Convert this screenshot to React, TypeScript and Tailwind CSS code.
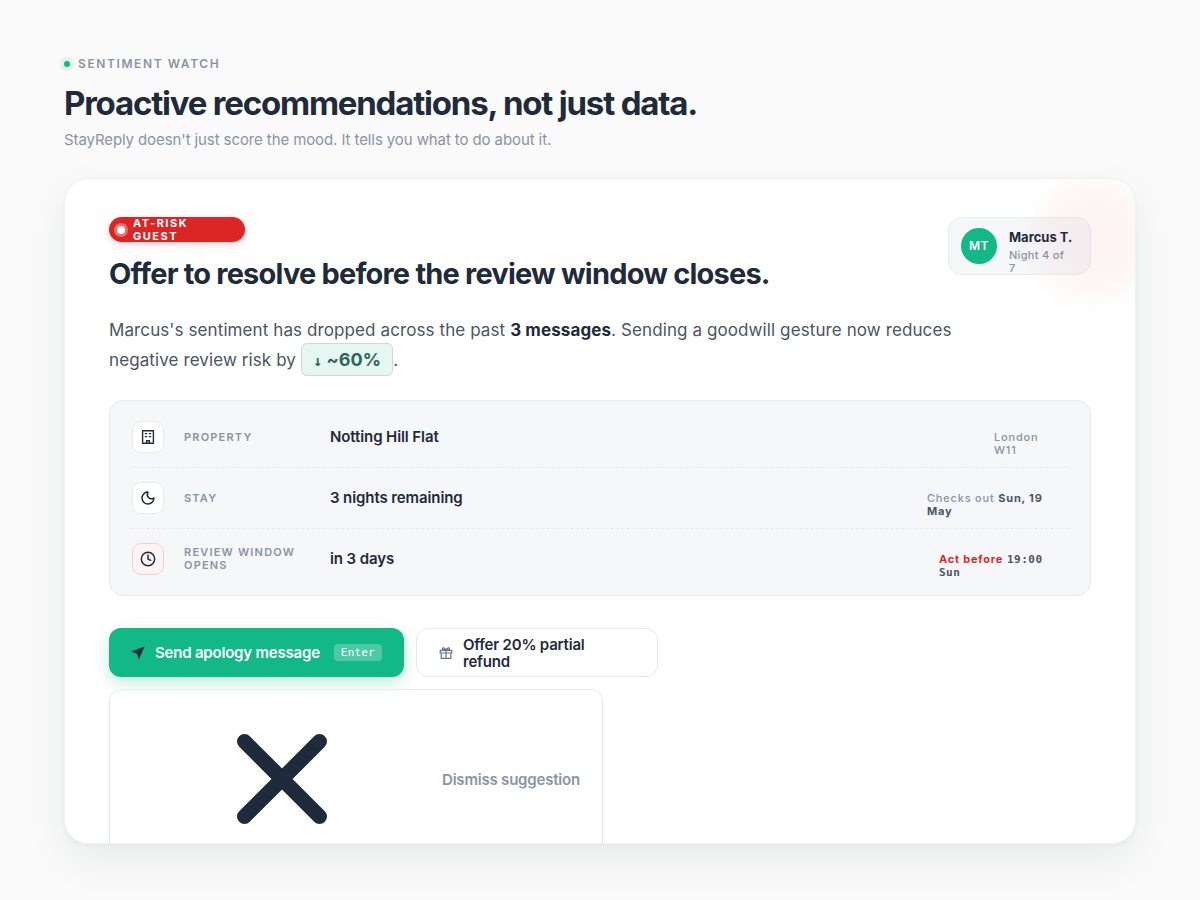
import type { ReactNode } from 'react'
import clsx from 'clsx'
import { Clock, Moon } from 'lucide-react'

type Detail = {
  label: string
  value: string
  icon: ReactNode
  meta: ReactNode
  metaWidth: string
  urgent?: boolean
}

function BuildingIcon() {
  return (
    <svg
      viewBox="0 0 16 16"
      className="size-4"
      fill="none"
      stroke="currentColor"
      strokeWidth="1.4"
      strokeLinejoin="round"
    >
      <path d="M2.6 1.7h10.8v12.6H2.6z" />
      <path d="M6.6 14v-2.2h2.8V14" />
      <path d="M4.8 4.6h2.4M8.8 4.6h2.4M4.8 7.6h2.4M8.8 7.6h2.4" />
    </svg>
  )
}

function SendIcon() {
  return (
    <svg viewBox="0 0 14 14" className="size-3.5 text-[#1f2a3a]">
      <path d="M13.6.4 7.8 13.4 6.2 7.9.2 5.6z" fill="currentColor" />
    </svg>
  )
}

function GiftIcon() {
  return (
    <svg
      viewBox="0 0 14 14"
      className="size-3.5 shrink-0 text-slate-500"
      fill="none"
      stroke="currentColor"
      strokeWidth="1.2"
      strokeLinejoin="round"
    >
      <path d="M1.2 4.4h11.6v2.6H1.2z" />
      <path d="M2.2 7v5.4h9.6V7M7 4.4v8" />
      <path d="M7 4.2C5.9 1.6 3.2 1 3.4 2.9 3.5 3.9 4.6 4.2 7 4.2zM7 4.2c1.1-2.6 3.8-3.2 3.6-1.3C10.5 3.9 9.4 4.2 7 4.2z" />
    </svg>
  )
}

const details: Detail[] = [
  {
    label: 'Property',
    value: 'Notting Hill Flat',
    icon: <BuildingIcon />,
    meta: (
      <>
        London
        <br />
        W11
      </>
    ),
    metaWidth: 'w-[74px]',
  },
  {
    label: 'Stay',
    value: '3 nights remaining',
    icon: <Moon className="size-4" strokeWidth={2.2} />,
    meta: (
      <>
        Checks out{' '}
        <strong className="font-bold text-[#4a5562]">
          Sun, 19
          <br />
          May
        </strong>
      </>
    ),
    metaWidth: 'w-[141px]',
  },
  {
    label: 'Review window opens',
    value: 'in 3 days',
    icon: <Clock className="size-4" strokeWidth={2.2} />,
    meta: (
      <>
        <span className="font-bold text-[#dc2626]">Act before</span>{' '}
        <span className="font-['DejaVu_Sans_Mono',monospace] font-bold tracking-[0.5px] text-[#4a5562]">
          19:00
          <br />
          Sun
        </span>
      </>
    ),
    metaWidth: 'w-[129px]',
    urgent: true,
  },
]

function DetailRow({ label, value, icon, meta, metaWidth, urgent }: Detail) {
  return (
    <li className="flex items-center gap-5 border-b border-dashed border-[#e6e9ec] py-3.5 last:border-b-0">
      <span
        className={clsx(
          'flex size-8 shrink-0 items-center justify-center rounded-[9px] border text-[#1f2a3a]',
          urgent ? 'border-[#f8cccc] bg-[#fdf5f4]' : 'border-[#e8eaed] bg-white',
        )}
      >
        {icon}
      </span>
      <span className="w-[126px] shrink-0 text-[11px] leading-[13px] font-semibold tracking-[1.2px] text-[#8a94a3] uppercase">
        {label}
      </span>
      <span className="flex-1 text-[15px] leading-5 font-semibold tracking-[-0.1px] text-[#1f2a3a]">
        {value}
      </span>
      <span
        className={clsx(
          'h-3 self-start pt-2.5 text-[11px] leading-[13px] font-medium tracking-[0.8px] text-[#8a94a3]',
          metaWidth,
        )}
      >
        {meta}
      </span>
    </li>
  )
}

function GuestChip() {
  return (
    <div className="flex h-[58px] w-[143px] shrink-0 items-start gap-3 rounded-[14px] border border-[#e8eaed] bg-[#f5f7f9] px-3 pt-2.5">
      <span className="flex size-9 shrink-0 items-center justify-center rounded-full bg-[#12b886] text-xs font-semibold tracking-[0.5px] text-white">
        MT
      </span>
      <div>
        <p className="text-[13px] leading-[19px] font-bold whitespace-nowrap text-[#1f2a3a]">
          Marcus T.
        </p>
        <p className="mt-0.5 text-[11px] leading-[13px] font-medium tracking-[0.3px] text-[#8a94a3]">
          Night 4 of
          <br />7
        </p>
      </div>
    </div>
  )
}

function App() {
  return (
    <main className="flex h-screen flex-col overflow-hidden bg-[#fafafa] px-16 py-14 font-['Inter',sans-serif]">
      <header>
        <p className="flex items-center gap-2 text-xs leading-[15px] font-semibold tracking-[1.6px] text-[#8a94a3] uppercase">
          <span className="size-1.5 rounded-full bg-[#12b886] ring-4 ring-[#12b886]/10" />
          Sentiment Watch
        </p>
        <h1 className="mt-3 text-[33px] leading-10 font-bold tracking-[-1.2px] text-[#1f2a3a]">
          Proactive recommendations, not just data.
        </h1>
        <p className="mt-2 text-[15px] leading-[18px] tracking-[-0.1px] text-[#8a94a3]">
          StayReply doesn't just score the mood. It tells you what to do about
          it.
        </p>
      </header>

      <section className="relative mt-[29px] min-h-0 flex-1 overflow-hidden rounded-3xl border border-[#f0f1f3] bg-white px-11 pt-[38px] shadow-[0_2px_4px_rgba(31,42,58,0.04),0_16px_40px_rgba(31,42,58,0.07)]">
        <div className="flex justify-between">
          <div>
            <p className="flex h-[25px] w-[136px] items-center gap-2 rounded-full bg-[#dc2626] pl-2 text-[11px] leading-[13px] font-bold tracking-[1.5px] text-white uppercase shadow-[0_2px_6px_rgba(220,38,38,0.25)]">
              <span className="size-2 shrink-0 rounded-full bg-white ring-3 ring-white/35" />
              <span>
                At-risk
                <br />
                guest
              </span>
            </p>
            <h2 className="mt-3 text-[29px] leading-10 font-bold tracking-[-0.8px] text-[#1f2a3a]">
              Offer to resolve before the review window closes.
            </h2>
          </div>
          <GuestChip />
        </div>

        <p className="mt-[21px] max-w-[860px] text-[17px] leading-[30px] tracking-[0.1px] text-[#4a5562]">
          Marcus's sentiment has dropped across the past{' '}
          <strong className="font-bold text-[#1f2a3a]">3 messages</strong>.
          Sending a goodwill gesture now reduces negative review risk by{' '}
          <strong className="rounded-md border border-[#c9ddd6] bg-[#e6f6f1] px-[11px] py-[5px] text-lg leading-[30px] font-bold text-[#2b6657]">
            <span className="font-['DejaVu_Sans_Mono',monospace] text-[15px]">
              ↓
            </span>{' '}
            ~60%
          </strong>
          .
        </p>

        <ul className="mt-6 rounded-[14px] border border-[#e8eaed] bg-[#f5f7f9] px-[22px] py-1.5">
          {details.map((detail) => (
            <DetailRow key={detail.label} {...detail} />
          ))}
        </ul>

        <div className="mt-8 flex flex-wrap gap-3 text-[15px] leading-[17px] font-semibold tracking-[-0.2px]">
          <button
            type="button"
            className="flex h-[49px] items-center gap-2.5 rounded-xl bg-[#12b886] px-[22px] text-white shadow-[0_6px_16px_rgba(18,184,134,0.25)]"
          >
            <SendIcon />
            Send apology message
            <kbd className="ml-1 rounded bg-white/25 px-[7px] font-['DejaVu_Sans_Mono',monospace] text-[11px] font-medium tracking-[0.2px]">
              Enter
            </kbd>
          </button>
          <button
            type="button"
            className="flex h-[49px] w-[242px] items-center gap-2.5 rounded-xl border border-[#e8eaed] bg-white px-[22px] text-left text-[#1f2a3a]"
          >
            <GiftIcon />
            <span>
              Offer 20% partial
              <br />
              refund
            </span>
          </button>
          <div className="w-full">
            <button
              type="button"
              className="flex items-center gap-2.5 rounded-xl border border-[#e8eaed] px-[22px] py-3.5 text-[#8a94a3]"
            >
              <svg
                viewBox="0 0 24 24"
                className="h-[150px] w-[300px] text-[#1f2a3a]"
                fill="none"
                stroke="currentColor"
                strokeWidth="2.4"
                strokeLinecap="round"
              >
                <path d="M6 6l12 12M18 6L6 18" />
              </svg>
              Dismiss suggestion
            </button>
          </div>
        </div>

        {/* soft alert glow in the corner */}
        <div className="pointer-events-none absolute -top-[30px] -right-[50px] size-[180px] rounded-full bg-[radial-gradient(closest-side,rgba(220,38,38,0.06),rgba(220,38,38,0.04)_50%,transparent_85%)]" />
      </section>
    </main>
  )
}

export default App
